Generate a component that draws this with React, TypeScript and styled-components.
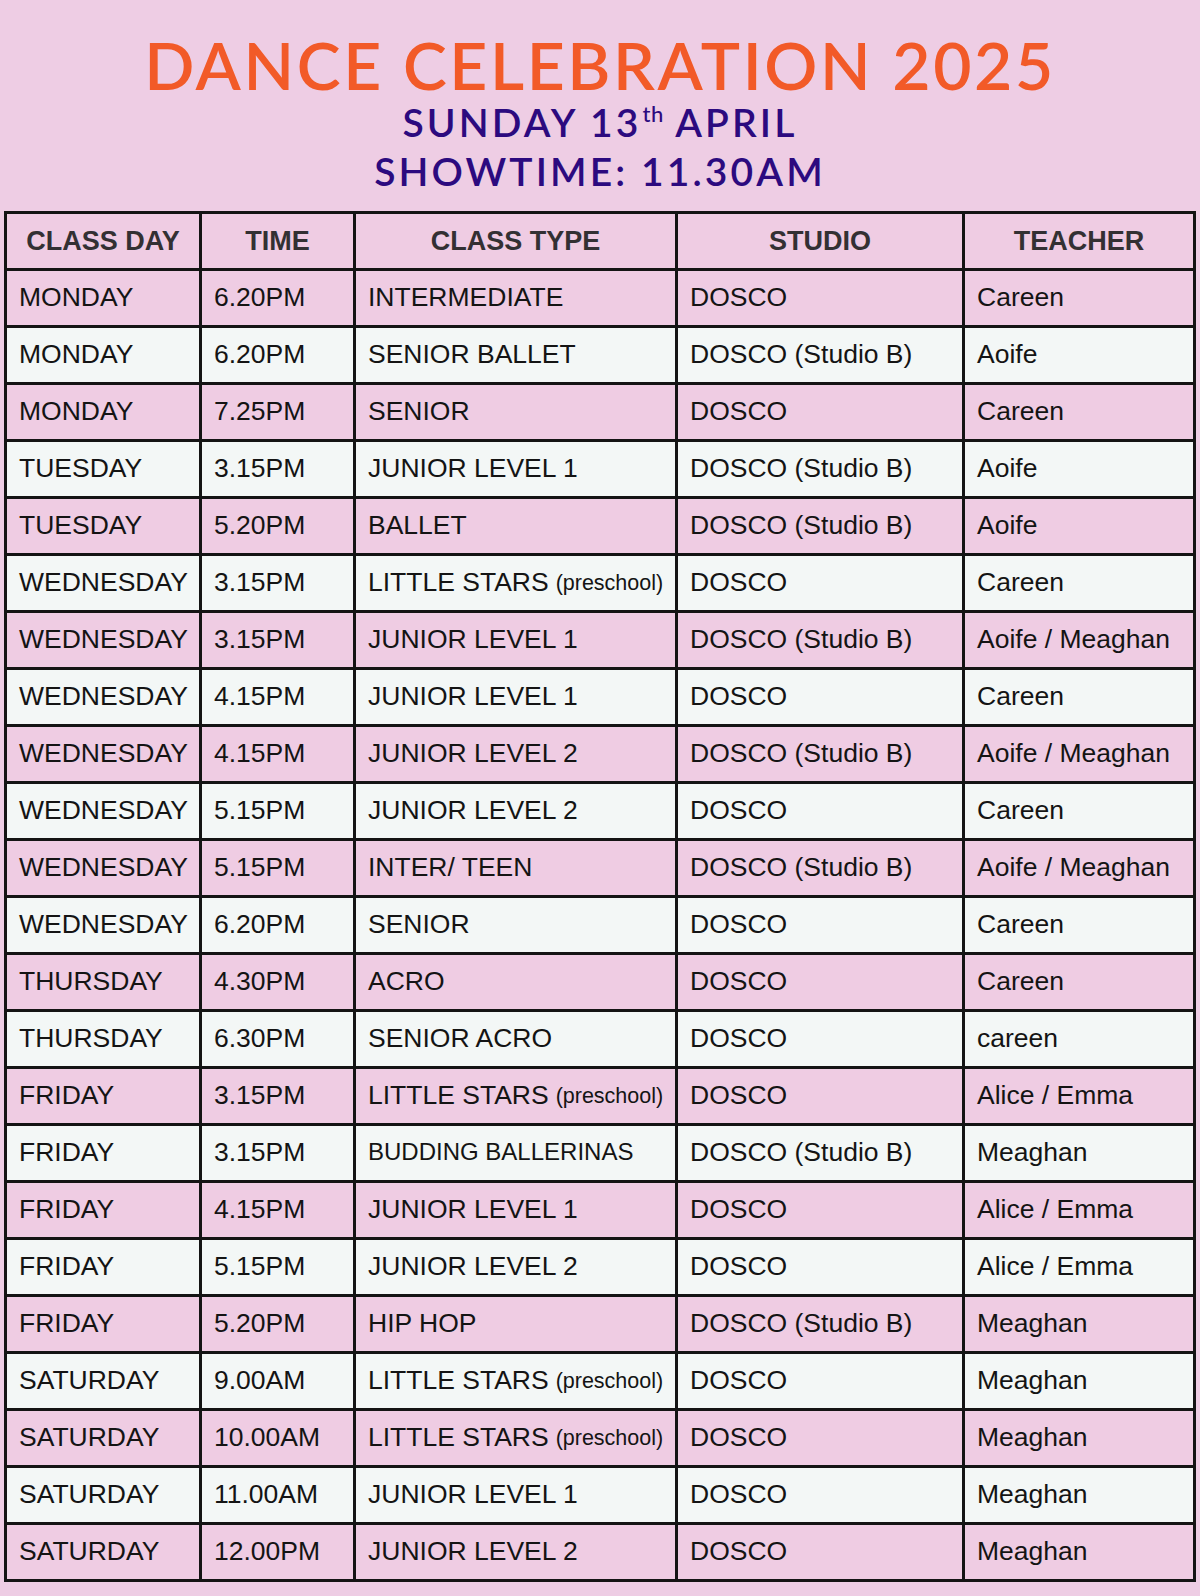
import React from "react";
import styled, { createGlobalStyle } from "styled-components";

const Global = createGlobalStyle`
  html, body {
    margin: 0;
    padding: 0;
    background: #eecde4;
  }
  body {
    font-family: "Liberation Sans", Arial, sans-serif;
  }
`;

const Page = styled.div`
  width: 1200px;
  min-height: 1596px;
  background: #eecde4;
  display: flex;
  flex-direction: column;
  align-items: center;
`;

const Heading = styled.header`
  padding-top: 32px;
  display: flex;
  flex-direction: column;
  align-items: center;
  font-family: Lato, "Open Sans", sans-serif;
`;

const Title = styled.h1`
  margin: 0;
  font-size: 66px;
  line-height: 66px;
  font-weight: 600;
  letter-spacing: 2.6px;
  color: #f25a28;
  white-space: nowrap;
`;

const SubLine = styled.div`
  font-size: 39px;
  line-height: 49px;
  font-weight: 600;
  letter-spacing: 3.1px;
  color: #2c0a7f;
  white-space: nowrap;
`;

const Sup = styled.sup`
  font-size: 22px;
  line-height: 0;
  letter-spacing: 0.5px;
  vertical-align: 15px;
  font-weight: 500;
  margin-left: 1px;
`;

const Table = styled.div`
  margin-top: 15px;
  width: 1192px;
  display: flex;
  flex-direction: column;
  gap: 3px;
  padding: 3px;
  box-sizing: border-box;
  background: #141414;
`;

const Row = styled.div<{ $tone: "pink" | "white" }>`
  display: grid;
  grid-template-columns: 192px 151px 319px 284px 228px;
  gap: 3px;
  height: 54px;
  & > * {
    background: ${(p) => (p.$tone === "pink" ? "#efcce3" : "#f3f7f6")};
  }
`;

const HeadCell = styled.div`
  display: flex;
  align-items: center;
  justify-content: center;
  font-family: "Liberation Sans", Arial, sans-serif;
  font-weight: 700;
  font-size: 27px;
  color: #333033;
  white-space: nowrap;
`;

const Cell = styled.div<{ $small?: boolean }>`
  display: flex;
  align-items: center;
  padding-left: 12px;
  padding-bottom: 2px;
  box-sizing: border-box;
  font-family: "Liberation Sans", Arial, sans-serif;
  font-size: ${(p) => (p.$small ? "24px" : "26.5px")};
  color: #141414;
  white-space: nowrap;
  overflow: hidden;
`;

const Note = styled.span`
  font-size: 21.5px;
  margin-left: 7px;
  padding-top: 3px;
`;

type Entry = [string, string, string, string, string];

const rows: Entry[] = [
  ["MONDAY", "6.20PM", "INTERMEDIATE", "DOSCO", "Careen"],
  ["MONDAY", "6.20PM", "SENIOR BALLET", "DOSCO (Studio B)", "Aoife"],
  ["MONDAY", "7.25PM", "SENIOR", "DOSCO", "Careen"],
  ["TUESDAY", "3.15PM", "JUNIOR LEVEL 1", "DOSCO (Studio B)", "Aoife"],
  ["TUESDAY", "5.20PM", "BALLET", "DOSCO (Studio B)", "Aoife"],
  ["WEDNESDAY", "3.15PM", "LITTLE STARS|(preschool)", "DOSCO", "Careen"],
  ["WEDNESDAY", "3.15PM", "JUNIOR LEVEL 1", "DOSCO (Studio B)", "Aoife / Meaghan"],
  ["WEDNESDAY", "4.15PM", "JUNIOR LEVEL 1", "DOSCO", "Careen"],
  ["WEDNESDAY", "4.15PM", "JUNIOR LEVEL 2", "DOSCO (Studio B)", "Aoife / Meaghan"],
  ["WEDNESDAY", "5.15PM", "JUNIOR LEVEL 2", "DOSCO", "Careen"],
  ["WEDNESDAY", "5.15PM", "INTER/ TEEN", "DOSCO (Studio B)", "Aoife / Meaghan"],
  ["WEDNESDAY", "6.20PM", "SENIOR", "DOSCO", "Careen"],
  ["THURSDAY", "4.30PM", "ACRO", "DOSCO", "Careen"],
  ["THURSDAY", "6.30PM", "SENIOR ACRO", "DOSCO", "careen"],
  ["FRIDAY", "3.15PM", "LITTLE STARS|(preschool)", "DOSCO", "Alice / Emma"],
  ["FRIDAY", "3.15PM", "~BUDDING BALLERINAS", "DOSCO (Studio B)", "Meaghan"],
  ["FRIDAY", "4.15PM", "JUNIOR LEVEL 1", "DOSCO", "Alice / Emma"],
  ["FRIDAY", "5.15PM", "JUNIOR LEVEL 2", "DOSCO", "Alice / Emma"],
  ["FRIDAY", "5.20PM", "HIP HOP", "DOSCO (Studio B)", "Meaghan"],
  ["SATURDAY", "9.00AM", "LITTLE STARS|(preschool)", "DOSCO", "Meaghan"],
  ["SATURDAY", "10.00AM", "LITTLE STARS|(preschool)", "DOSCO", "Meaghan"],
  ["SATURDAY", "11.00AM", "JUNIOR LEVEL 1", "DOSCO", "Meaghan"],
  ["SATURDAY", "12.00PM", "JUNIOR LEVEL 2", "DOSCO", "Meaghan"],
];

function ClassType({ value }: { value: string }) {
  if (value.startsWith("~")) {
    return <Cell $small>{value.slice(1)}</Cell>;
  }
  const [main, note] = value.split("|");
  return (
    <Cell>
      {main}
      {note && <Note>{note}</Note>}
    </Cell>
  );
}

export default function App() {
  return (
    <Page>
      <Global />
      <Heading>
        <Title>DANCE CELEBRATION 2025</Title>
        <SubLine>
          SUNDAY 13<Sup>th</Sup> APRIL
        </SubLine>
        <SubLine>SHOWTIME: 11.30AM</SubLine>
      </Heading>
      <Table>
        <Row $tone="pink">
          <HeadCell>CLASS DAY</HeadCell>
          <HeadCell>TIME</HeadCell>
          <HeadCell>CLASS TYPE</HeadCell>
          <HeadCell>STUDIO</HeadCell>
          <HeadCell>TEACHER</HeadCell>
        </Row>
        {rows.map((r, i) => (
          <Row key={i} $tone={i % 2 === 0 ? "pink" : "white"}>
            <Cell>{r[0]}</Cell>
            <Cell>{r[1]}</Cell>
            <ClassType value={r[2]} />
            <Cell>{r[3]}</Cell>
            <Cell>{r[4]}</Cell>
          </Row>
        ))}
      </Table>
    </Page>
  );
}
